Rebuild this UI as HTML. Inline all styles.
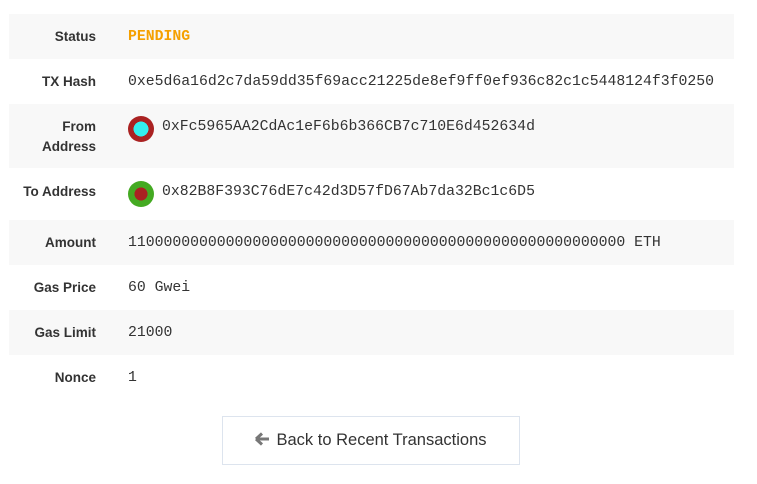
<!DOCTYPE html>
<html><head><style>
body{margin:0;background:#fff;width:757px;height:484px;font-family:"Liberation Sans",sans-serif;color:#333;position:relative}
.row{position:absolute;left:9px;width:725px}
.s{background:#f8f8f8}
.l{position:absolute;left:0;width:87px;text-align:right;font-weight:bold;font-size:13.5px;color:#333;line-height:20px}
.v{position:absolute;left:119px;font-family:"Liberation Mono",monospace;font-size:14.8px;color:#333;line-height:20px;white-space:nowrap}
.av{position:absolute;left:0;top:-1px;width:26px;height:26px;border-radius:50%}
.btn{position:absolute;left:222px;top:416px;width:298px;height:49px;border:1px solid #dde4ee;box-sizing:border-box;font-size:16.5px;color:#333;text-align:center;line-height:47px}
</style></head><body>
<div class="row s" style="top:14px;height:45px"><div class="l" style="top:13px">Status</div><div class="v" style="top:13px;color:#f5a000;font-weight:bold">PENDING</div></div>
<div class="row" style="top:59px;height:45px"><div class="l" style="top:13px">TX Hash</div><div class="v" style="top:13px">0xe5d6a16d2c7da59dd35f69acc21225de8ef9ff0ef936c82c1c5448124f3f0250</div></div>
<div class="row s" style="top:104px;height:64px"><div class="l" style="top:13px;left:20px;width:67px">From Address</div><div class="v" style="top:13px"><span class="av" style="background:radial-gradient(circle,#3ee 0 40%,#a22 41% 100%)"></span><span style="margin-left:34px">0xFc5965AA2CdAc1eF6b6b366CB7c710E6d452634d</span></div></div>
<div class="row" style="top:168px;height:52px"><div class="l" style="top:14px">To Address</div><div class="v" style="top:14px"><span class="av" style="background:radial-gradient(circle,#a22 0 35%,#4a2 36% 100%)"></span><span style="margin-left:34px">0x82B8F393C76dE7c42d3D57fD67Ab7da32Bc1c6D5</span></div></div>
<div class="row s" style="top:220px;height:45px"><div class="l" style="top:13px">Amount</div><div class="v" style="top:13px">11000000000000000000000000000000000000000000000000000000 ETH</div></div>
<div class="row" style="top:265px;height:45px"><div class="l" style="top:13px">Gas Price</div><div class="v" style="top:13px">60 Gwei</div></div>
<div class="row s" style="top:310px;height:45px"><div class="l" style="top:13px">Gas Limit</div><div class="v" style="top:13px">21000</div></div>
<div class="row" style="top:355px;height:45px"><div class="l" style="top:13px">Nonce</div><div class="v" style="top:13px">1</div></div>
<div class="btn"><svg width="15" height="14" viewBox="0 0 15 14" style="vertical-align:-1px;margin-right:6px"><path d="M1 7L7 1.5M1 7L7 12.5M1 7H14" stroke="#777" stroke-width="3" fill="none"/></svg>Back to Recent Transactions</div>
</body></html>
